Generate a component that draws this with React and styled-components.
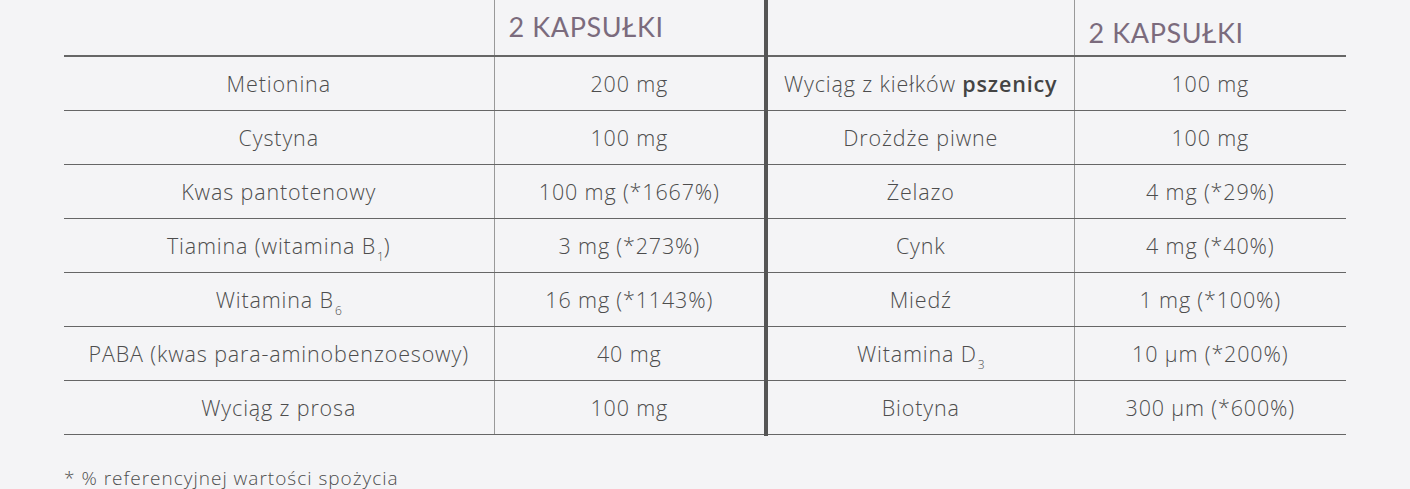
import React from "react";
import styled, { createGlobalStyle } from "styled-components";

const Global = createGlobalStyle`
  html, body { margin: 0; padding: 0; background: #f4f4f6; }
  body { font-family: "Open Sans", Lato, sans-serif; color: #555; }
`;

const Page = styled.div`
  width: 1410px;
  height: 489px;
  box-sizing: border-box;
  padding: 0 64px;
  background: #f4f4f6;
`;

const Tables = styled.div`
  display: flex;
  align-items: flex-start;
`;

const Table = styled.table`
  border-collapse: collapse;
  table-layout: fixed;
  width: ${(p) => p.$width}px;
`;

const Divider = styled.div`
  width: 4px;
  background: #555;
  height: 436px;
`;

const HeadCell = styled.th`
  height: 56px;
  padding: 0 0 0 14px;
  box-sizing: border-box;
  border-bottom: 2px solid #666;
  text-align: left;
  vertical-align: top;
  padding-top: ${(p) => p.$top}px;
  font-family: Lato, "Open Sans", sans-serif;
  font-weight: 400;
  font-size: 27px;
  letter-spacing: 0.6px;
  color: #7b6b7d;
  &:first-child { border-right: 1px solid #999; }
`;

const Cell = styled.td`
  height: 54.1px;
  padding: 0;
  box-sizing: border-box;
  border-bottom: 1px solid #666;
  text-align: center;
  vertical-align: middle;
  font-size: 21.5px;
  font-weight: 300;
  letter-spacing: 0.85px;
  color: #4d4d4d;
  white-space: nowrap;
  &:first-child { border-right: 1px solid #999; }
`;

const Sub = styled.sub`
  font-size: 12px;
  letter-spacing: 0;
  vertical-align: -7px;
  line-height: 0;
  margin-left: 1px;
`;

const Bold = styled.b`
  font-weight: 600;
  color: #444;
`;

const Footnote = styled.p`
  margin: 29px 0 0;
  font-size: 19px;
  font-weight: 300;
  letter-spacing: 1px;
  color: #4d4d4d;
`;

const left = [
  ["Metionina", "200 mg"],
  ["Cystyna", "100 mg"],
  ["Kwas pantotenowy", "100 mg (*1667%)"],
  [<>Tiamina (witamina B<Sub>1</Sub>)</>, "3 mg (*273%)"],
  [<>Witamina B<Sub>6</Sub></>, "16 mg (*1143%)"],
  ["PABA (kwas para-aminobenzoesowy)", "40 mg"],
  ["Wyciąg z prosa", "100 mg"],
];

const right = [
  [<>Wyciąg z kiełków <Bold>pszenicy</Bold></>, "100 mg"],
  ["Drożdże piwne", "100 mg"],
  ["Żelazo", "4 mg (*29%)"],
  ["Cynk", "4 mg (*40%)"],
  ["Miedź", "1 mg (*100%)"],
  [<>Witamina D<Sub>3</Sub></>, "10 µm (*200%)"],
  ["Biotyna", "300 µm (*600%)"],
];

function Half({ rows, cols, headTop }) {
  return (
    <Table $width={cols[0] + cols[1]}>
      <colgroup>
        <col style={{ width: cols[0] }} />
        <col style={{ width: cols[1] }} />
      </colgroup>
      <thead>
        <tr>
          <HeadCell $top={headTop}></HeadCell>
          <HeadCell $top={headTop}>2 KAPSUŁKI</HeadCell>
        </tr>
      </thead>
      <tbody>
        {rows.map((r, i) => (
          <tr key={i}>
            <Cell>{r[0]}</Cell>
            <Cell>{r[1]}</Cell>
          </tr>
        ))}
      </tbody>
    </Table>
  );
}

export default function App() {
  return (
    <Page>
      <Global />
      <Tables>
        <Half rows={left} cols={[430, 270]} headTop={10} />
        <Divider />
        <Half rows={right} cols={[306, 272]} headTop={16} />
      </Tables>
      <Footnote>* % referencyjnej wartości spożycia</Footnote>
    </Page>
  );
}
